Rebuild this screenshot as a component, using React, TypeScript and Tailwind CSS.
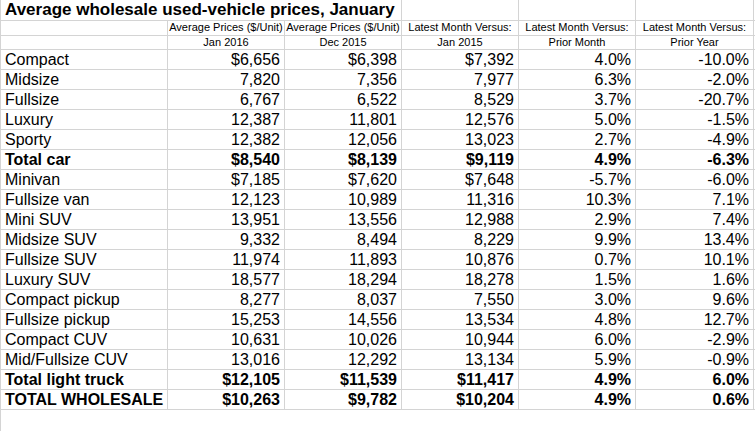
const widths = [167, 117, 117, 117, 117, 118];

const rows: [string, string, string, string, string, string, boolean?][] = [
  ["Compact", "$6,656", "$6,398", "$7,392", "4.0%", "-10.0%"],
  ["Midsize", "7,820", "7,356", "7,977", "6.3%", "-2.0%"],
  ["Fullsize", "6,767", "6,522", "8,529", "3.7%", "-20.7%"],
  ["Luxury", "12,387", "11,801", "12,576", "5.0%", "-1.5%"],
  ["Sporty", "12,382", "12,056", "13,023", "2.7%", "-4.9%"],
  ["Total car", "$8,540", "$8,139", "$9,119", "4.9%", "-6.3%", true],
  ["Minivan", "$7,185", "$7,620", "$7,648", "-5.7%", "-6.0%"],
  ["Fullsize van", "12,123", "10,989", "11,316", "10.3%", "7.1%"],
  ["Mini SUV", "13,951", "13,556", "12,988", "2.9%", "7.4%"],
  ["Midsize SUV", "9,332", "8,494", "8,229", "9.9%", "13.4%"],
  ["Fullsize SUV", "11,974", "11,893", "10,876", "0.7%", "10.1%"],
  ["Luxury SUV", "18,577", "18,294", "18,278", "1.5%", "1.6%"],
  ["Compact pickup", "8,277", "8,037", "7,550", "3.0%", "9.6%"],
  ["Fullsize pickup", "15,253", "14,556", "13,534", "4.8%", "12.7%"],
  ["Compact CUV", "10,631", "10,026", "10,944", "6.0%", "-2.9%"],
  ["Mid/Fullsize CUV", "13,016", "12,292", "13,134", "5.9%", "-0.9%"],
  ["Total light truck", "$12,105", "$11,539", "$11,417", "4.9%", "6.0%", true],
  ["TOTAL WHOLESALE", "$10,263", "$9,782", "$10,204", "4.9%", "0.6%", true],
];

const head1 = ["", "Average Prices ($/Unit)", "Average Prices ($/Unit)", "Latest Month Versus:", "Latest Month Versus:", "Latest Month Versus:"];
const head2 = ["", "Jan 2016", "Dec 2015", "Jan 2015", "Prior Month", "Prior Year"];

export default function App() {
  return (
    <div
      className="w-[755px] h-[431px] overflow-hidden bg-white text-black border-l border-[#d4d4d4]"
      style={{ fontFamily: '"Liberation Sans", Arial, sans-serif' }}
    >
      <div className="flex h-[21px] border-b border-[#d4d4d4]">
        <div className="w-[401px] shrink-0 border-r border-[#d4d4d4] pl-1 text-[17px] font-bold leading-[20px] whitespace-nowrap">
          Average wholesale used-vehicle prices, January
        </div>
        {widths.slice(3).map((w, i) => (
          <div key={i} style={{ width: w }} className="shrink-0 border-r border-[#d4d4d4]" />
        ))}
      </div>
      {[head1, head2].map((h, r) => (
        <div key={r} className="flex h-[14.5px] border-b border-[#d4d4d4]">
          {h.map((t, i) => (
            <div
              key={i}
              style={{ width: widths[i] }}
              className="shrink-0 border-r border-[#d4d4d4] text-center text-[11px] leading-[13px] whitespace-nowrap overflow-hidden"
            >
              {t}
            </div>
          ))}
        </div>
      ))}
      {rows.map((row) => (
        <div key={row[0]} className={`flex h-[20px] border-b border-[#d4d4d4] ${row[6] ? "font-bold" : ""}`}>
          {row.slice(0, 6).map((t, i) => (
            <div
              key={i}
              style={{ width: widths[i] }}
              className={`shrink-0 border-r border-[#d4d4d4] text-[16px] leading-[19px] whitespace-nowrap overflow-hidden ${
                i === 0 ? "pl-1" : "text-right pr-1"
              }`}
            >
              {t as string}
            </div>
          ))}
        </div>
      ))}
    </div>
  );
}
